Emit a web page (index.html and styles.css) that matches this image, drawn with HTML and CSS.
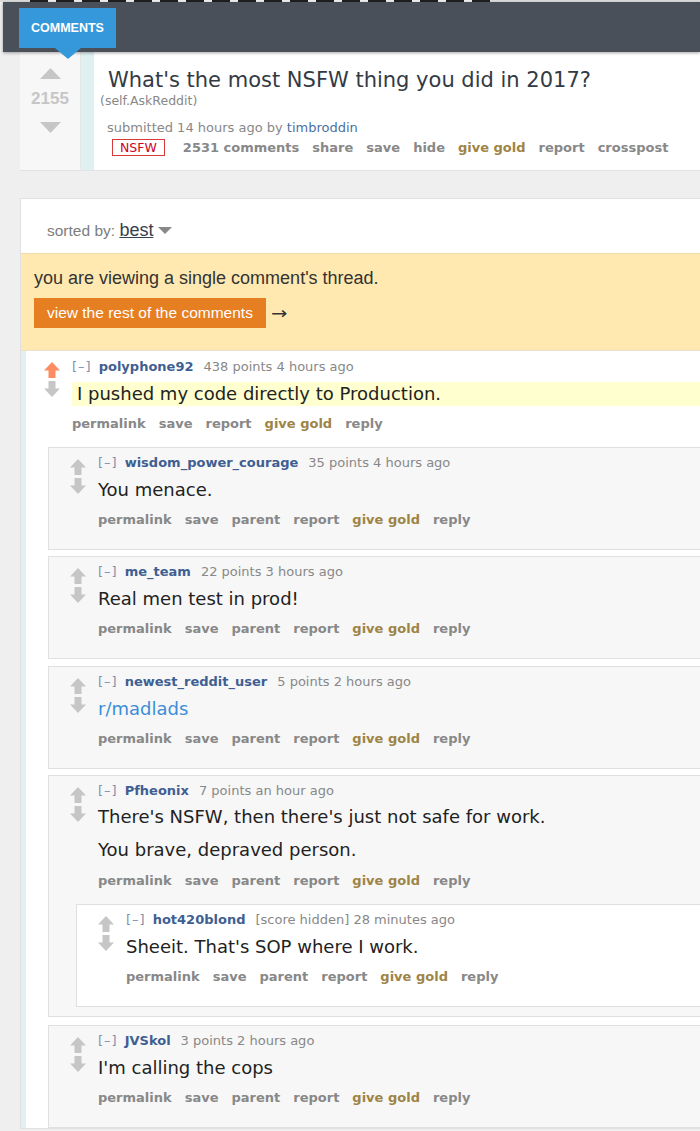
FILE: index.html
```html
<!DOCTYPE html>
<html>
<head>
<meta charset="utf-8">
<title>What's the most NSFW thing you did in 2017?</title>
<link rel="stylesheet" href="styles.css">
</head>
<body>
<div class="topstrip"><span></span></div>
<header class="topbar"><div class="tab">COMMENTS</div></header>
<main class="page">
  <section class="post">
    <div class="post-vote">
      <svg class="tri" width="21" height="11" viewBox="0 0 21 11"><path d="M10.5 0 L21 11 H0 Z"/></svg>
      <div class="score">2155</div>
      <svg class="tri" width="21" height="11" viewBox="0 0 21 11"><path d="M0 0 H21 L10.5 11 Z"/></svg>
    </div>
    <div class="post-stripe"></div>
    <div class="post-body">
      <h1 class="title">What's the most NSFW thing you did in 2017?</h1>
      <div class="domain">(self.AskReddit)</div>
      <div class="tagline">submitted 14 hours ago by <a class="user-link">timbroddin</a></div>
      <ul class="flat">
        <li class="nsfw">NSFW</li>
        <li>2531 comments</li>
        <li>share</li>
        <li>save</li>
        <li>hide</li>
        <li class="gold">give gold</li>
        <li>report</li>
        <li>crosspost</li>
      </ul>
    </div>
  </section>

  <section class="panel">
    <div class="sort">sorted by: <span class="sel">best</span><span class="caret"></span></div>
    <div class="banner">
      <div class="banner-text">you are viewing a single comment's thread.</div>
      <div class="banner-actions"><span class="btn">view the rest of the comments</span><span class="next">→</span></div>
    </div>

    <div class="thread">
      <div class="comment top">
        <div class="entry">
          <div class="arrows">
            <svg class="arr up liked" width="16" height="16" viewBox="0 0 16 16"><path d="M8 0 L16 8.5 H11.5 V16 H4.5 V8.5 H0 Z"/></svg>
            <svg class="arr" width="16" height="16" viewBox="0 0 16 16"><path d="M4.5 0 H11.5 V7.5 H16 L8 16 L0 7.5 H4.5 Z"/></svg>
          </div>
          <div class="main">
            <div class="ctag"><span class="expand">[–]</span><span class="author">polyphone92</span><span>438 points 4 hours ago</span></div>
            <div class="body hl"><p>I pushed my code directly to Production.</p></div>
            <ul class="links"><li>permalink</li><li>save</li><li>report</li><li class="gold">give gold</li><li>reply</li></ul>
          </div>
        </div>

        <div class="children">
          <div class="comment box">
            <div class="entry">
              <div class="arrows">
                <svg class="arr" width="16" height="16" viewBox="0 0 16 16"><path d="M8 0 L16 8.5 H11.5 V16 H4.5 V8.5 H0 Z"/></svg>
                <svg class="arr" width="16" height="16" viewBox="0 0 16 16"><path d="M4.5 0 H11.5 V7.5 H16 L8 16 L0 7.5 H4.5 Z"/></svg>
              </div>
              <div class="main">
                <div class="ctag"><span class="expand">[–]</span><span class="author">wisdom_power_courage</span><span>35 points 4 hours ago</span></div>
                <div class="body"><p>You menace.</p></div>
                <ul class="links"><li>permalink</li><li>save</li><li>parent</li><li>report</li><li class="gold">give gold</li><li>reply</li></ul>
              </div>
            </div>
          </div>

          <div class="comment box">
            <div class="entry">
              <div class="arrows">
                <svg class="arr" width="16" height="16" viewBox="0 0 16 16"><path d="M8 0 L16 8.5 H11.5 V16 H4.5 V8.5 H0 Z"/></svg>
                <svg class="arr" width="16" height="16" viewBox="0 0 16 16"><path d="M4.5 0 H11.5 V7.5 H16 L8 16 L0 7.5 H4.5 Z"/></svg>
              </div>
              <div class="main">
                <div class="ctag"><span class="expand">[–]</span><span class="author">me_team</span><span>22 points 3 hours ago</span></div>
                <div class="body"><p>Real men test in prod!</p></div>
                <ul class="links"><li>permalink</li><li>save</li><li>parent</li><li>report</li><li class="gold">give gold</li><li>reply</li></ul>
              </div>
            </div>
          </div>

          <div class="comment box">
            <div class="entry">
              <div class="arrows">
                <svg class="arr" width="16" height="16" viewBox="0 0 16 16"><path d="M8 0 L16 8.5 H11.5 V16 H4.5 V8.5 H0 Z"/></svg>
                <svg class="arr" width="16" height="16" viewBox="0 0 16 16"><path d="M4.5 0 H11.5 V7.5 H16 L8 16 L0 7.5 H4.5 Z"/></svg>
              </div>
              <div class="main">
                <div class="ctag"><span class="expand">[–]</span><span class="author">newest_reddit_user</span><span>5 points 2 hours ago</span></div>
                <div class="body"><p><a class="sub-link">r/madlads</a></p></div>
                <ul class="links"><li>permalink</li><li>save</li><li>parent</li><li>report</li><li class="gold">give gold</li><li>reply</li></ul>
              </div>
            </div>
          </div>

          <div class="comment box parent">
            <div class="entry">
              <div class="arrows">
                <svg class="arr" width="16" height="16" viewBox="0 0 16 16"><path d="M8 0 L16 8.5 H11.5 V16 H4.5 V8.5 H0 Z"/></svg>
                <svg class="arr" width="16" height="16" viewBox="0 0 16 16"><path d="M4.5 0 H11.5 V7.5 H16 L8 16 L0 7.5 H4.5 Z"/></svg>
              </div>
              <div class="main">
                <div class="ctag"><span class="expand">[–]</span><span class="author">Pfheonix</span><span>7 points an hour ago</span></div>
                <div class="body multi"><p>There's NSFW, then there's just not safe for work.</p><p>You brave, depraved person.</p></div>
                <ul class="links"><li>permalink</li><li>save</li><li>parent</li><li>report</li><li class="gold">give gold</li><li>reply</li></ul>
              </div>
            </div>
            <div class="children">
              <div class="comment box">
                <div class="entry">
                  <div class="arrows">
                    <svg class="arr" width="16" height="16" viewBox="0 0 16 16"><path d="M8 0 L16 8.5 H11.5 V16 H4.5 V8.5 H0 Z"/></svg>
                    <svg class="arr" width="16" height="16" viewBox="0 0 16 16"><path d="M4.5 0 H11.5 V7.5 H16 L8 16 L0 7.5 H4.5 Z"/></svg>
                  </div>
                  <div class="main">
                    <div class="ctag"><span class="expand">[–]</span><span class="author">hot420blond</span><span>[score hidden] 28 minutes ago</span></div>
                    <div class="body"><p>Sheeit. That's SOP where I work.</p></div>
                    <ul class="links"><li>permalink</li><li>save</li><li>parent</li><li>report</li><li class="gold">give gold</li><li>reply</li></ul>
                  </div>
                </div>
              </div>
            </div>
          </div>

          <div class="comment box">
            <div class="entry">
              <div class="arrows">
                <svg class="arr" width="16" height="16" viewBox="0 0 16 16"><path d="M8 0 L16 8.5 H11.5 V16 H4.5 V8.5 H0 Z"/></svg>
                <svg class="arr" width="16" height="16" viewBox="0 0 16 16"><path d="M4.5 0 H11.5 V7.5 H16 L8 16 L0 7.5 H4.5 Z"/></svg>
              </div>
              <div class="main">
                <div class="ctag"><span class="expand">[–]</span><span class="author">JVSkol</span><span>3 points 2 hours ago</span></div>
                <div class="body"><p>I'm calling the cops</p></div>
                <ul class="links"><li>permalink</li><li>save</li><li>parent</li><li>report</li><li class="gold">give gold</li><li>reply</li></ul>
              </div>
            </div>
          </div>
        </div>
      </div>
    </div>
  </section>
</main>
</body>
</html>
```

FILE: styles.css
```css
html, body {
  margin: 0;
  padding: 0;
  overflow: hidden;
}
body {
  background: #efefef;
  font-family: "DejaVu Sans", Verdana, sans-serif;
  width: 700px;
  height: 1131px;
}

/* top strip + header */
.topstrip {
  height: 2px;
  background: #dcdcdc;
}
.topstrip span {
  display: block;
  margin-left: 30px;
  width: 460px;
  height: 2px;
  background: repeating-linear-gradient(90deg, #1f1f1f 0 18px, #f0f0f0 18px 26px);
}
.topbar {
  position: relative;
  z-index: 2;
  margin-left: 3px;
  height: 50px;
  box-sizing: border-box;
  padding: 6px 0 0 16px;
  background: #4a505a;
  box-shadow: 0 1px 3px rgba(0, 0, 0, 0.35);
}
.tab {
  position: relative;
  width: 97px;
  height: 40px;
  background: #3498db;
  color: #fff;
  font: bold 12.5px/40px "Liberation Sans", Arial, sans-serif;
  text-align: center;
}
.tab::after {
  content: "";
  position: absolute;
  left: 50%;
  top: 100%;
  margin-left: -13px;
  border-left: 13px solid transparent;
  border-right: 13px solid transparent;
  border-top: 11px solid #3498db;
}

.page {
  margin-left: 20px;
  width: 700px;
}

/* post */
.post {
  display: flex;
  background: #fff;
  border-bottom: 1px solid #e3e3e3;
}
.post-vote {
  width: 60px;
  flex: none;
  background: #f7f7f7;
  border-right: 1px solid #e6e6e6;
  display: flex;
  flex-direction: column;
  align-items: center;
  padding-top: 16px;
}
.tri {
  display: block;
  fill: #c6c6c6;
}
.score {
  font: bold 17px/20px "Liberation Sans", Arial, sans-serif;
  color: #c6c6c6;
  margin: 10px 0 13px;
}
.post-stripe {
  width: 13px;
  flex: none;
  background: #dff0f0;
}
.post-body {
  flex: 1;
  padding: 14px 0 14px 6px;
}
.title {
  margin: 0 0 0 8px;
  font-weight: normal;
  font-size: 21px;
  line-height: 28px;
  color: #333a44;
}
.domain {
  font-size: 12.5px;
  line-height: 14px;
  color: #888;
}
.tagline {
  margin: 12px 0 0 7px;
  font-size: 13px;
  line-height: 16px;
  color: #888;
}
.user-link {
  color: #4a6fa5;
  text-decoration: none;
}
.flat {
  list-style: none;
  margin: 3px 0 0 12px;
  padding: 0;
  display: flex;
  align-items: center;
  gap: 13px;
  font-weight: bold;
  font-size: 13px;
  line-height: 17px;
  color: #888;
  white-space: nowrap;
}
.nsfw {
  font-weight: normal;
  font-size: 12.5px;
  line-height: 15px;
  color: #d10023;
  border: 1px solid #d83a3a;
  padding: 0 7px;
  margin-right: 5px;
}
.gold {
  color: #9e8446;
}

/* comments panel */
.panel {
  margin-top: 27px;
  background: #fff;
  border: 1px solid #e0e0e0;
  border-right: none;
}
.sort {
  padding: 21px 0 12px 26px;
  font-family: "Liberation Sans", Arial, sans-serif;
  font-size: 15.5px;
  line-height: 20px;
  color: #7d7d7d;
}
.sel {
  font-size: 18px;
  color: #36404e;
  text-decoration: underline;
}
.caret {
  display: inline-block;
  width: 0;
  height: 0;
  border-left: 7px solid transparent;
  border-right: 7px solid transparent;
  border-top: 7px solid #888;
  margin-left: 5px;
  vertical-align: 2px;
}
.banner {
  background: #ffe9b0;
  border-top: 1px solid #efdcab;
  border-bottom: 1px solid #e9e1c9;
  padding: 13px 0 22px 13px;
  font-family: "Liberation Sans", Arial, sans-serif;
}
.banner-text {
  font-size: 18px;
  line-height: 22px;
  color: #333;
}
.banner-actions {
  display: flex;
  align-items: center;
  margin-top: 9px;
}
.btn {
  height: 30px;
  line-height: 30px;
  padding: 0 13px;
  background: #e67e22;
  color: #fff;
  font-size: 15.5px;
}
.next {
  margin-left: 5px;
  font-family: "DejaVu Sans", sans-serif;
  font-size: 17px;
  line-height: 30px;
  color: #333;
  transform: scaleX(1.15);
  transform-origin: left center;
}

/* thread */
.thread {
  border-left: 5px solid #e3f0f3;
}
.entry {
  display: flex;
  gap: 12px;
}
.top > .entry {
  padding: 8px 0 0 18px;
}
.arrows {
  flex: none;
  width: 16px;
  display: flex;
  flex-direction: column;
  gap: 3px;
  padding-top: 3px;
}
.arr {
  display: block;
  fill: #c6c6c6;
}
.arr.liked {
  fill: #ff8b60;
}
.main {
  flex: 1;
  min-width: 0;
}
.ctag {
  font-size: 13px;
  line-height: 16px;
  color: #888;
  white-space: nowrap;
}
.expand {
  color: #7e90ae;
  letter-spacing: 1px;
  margin-right: 7px;
}
.author {
  font-weight: bold;
  color: #3f5f92;
  margin-right: 10px;
}
.body {
  margin-top: 8px;
  font-size: 18px;
  line-height: 22px;
  color: #222;
  white-space: nowrap;
}
.body.multi {
  margin-top: 7px;
}
.body p {
  margin: 0;
}
.body p + p {
  margin-top: 11px;
}
.body.multi + .links {
  margin-top: 12px;
}
.body.hl {
  margin-top: 7px;
  line-height: 24px;
  padding-left: 5px;
  background: #ffffcf;
}
.sub-link {
  color: #3b8ed8;
  text-decoration: none;
}
.links {
  list-style: none;
  margin: 11px 0 0;
  padding: 0;
  display: flex;
  gap: 13px;
  font-weight: bold;
  font-size: 13px;
  line-height: 16px;
  color: #888;
  white-space: nowrap;
}
.top > .entry .links {
  margin-top: 10px;
}
.top > .children {
  margin: 15px 0 0 22px;
}

/* boxed child comments */
.box {
  background: #f7f7f7;
  border: 1px solid #e0e0e0;
  border-right: none;
  padding-bottom: 21px;
}
.box + .box {
  margin-top: 6.4px;
}
.box.parent + .box {
  margin-top: 8px;
}
.box > .entry {
  padding: 7px 0 0 21px;
}
.box .arrows {
  padding-top: 4px;
}
.box.parent {
  padding-bottom: 9px;
}
.box > .children {
  margin: 15px 0 0 27px;
}
.box .box {
  background: #fff;
}
```
